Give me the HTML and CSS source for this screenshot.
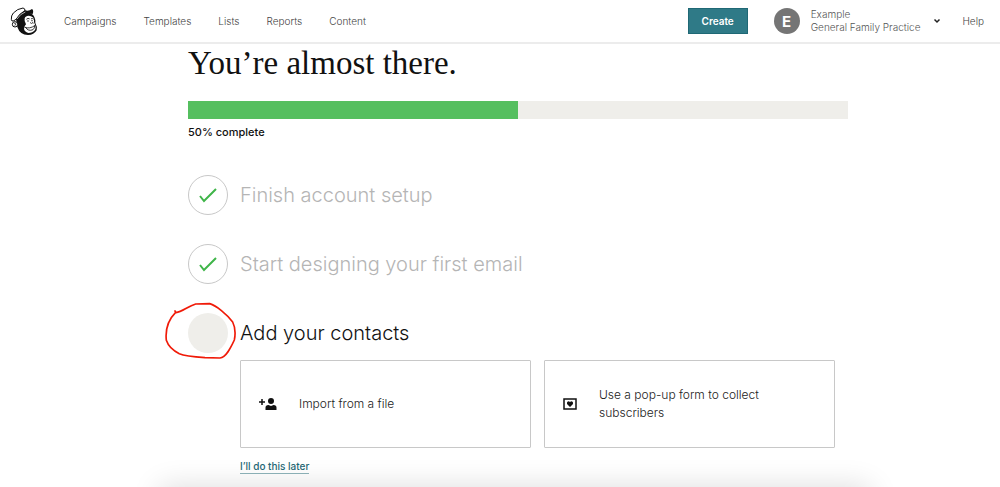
FILE: index.html
```html
<!DOCTYPE html>
<html lang="en">
<head>
  <meta charset="UTF-8">
  <meta name="viewport" content="width=device-width, initial-scale=1">
  <title>Mailchimp</title>
  <link rel="stylesheet" href="styles.css">
</head>
<body>

<header class="topbar">
  <a class="logo" href="#" aria-label="Mailchimp">
    <svg viewBox="30 24 84 87" width="28" height="29">
      <path fill="#111" d="M48 58 Q56 44 74 40 Q98 40 103 54 Q107 62 106 72 Q113 84 110 94 Q102 108 84 108 Q60 108 52 84 Z"/>
      <path fill="#fff" d="M76 54 Q85 48 93 52 Q101 54 102 62 Q101 70 104 74 Q109 86 105 93 Q98 102 85 102 Q73 98 72 89 Q72 82 78 76 Q72 66 74 58 Z"/>
      <path fill="none" stroke="#111" stroke-width="2.5" stroke-linecap="round" d="M75 85 Q89 91 104 80 M77 86 Q85 98 99 92 Q104 88 104 81 M92 71 l2 3 M98 70 l1 3 M80 60 q4 -4 8 -1 M94 59 q4 -2 6 1"/>
      <circle cx="84" cy="66" r="2" fill="#111"/>
      <circle cx="96" cy="65" r="2" fill="#111"/>
      <path fill="#fff" stroke="#111" stroke-width="3" stroke-linejoin="round" d="M34 61 Q33 50 40 42 Q52 29 69 27 Q76 28 75 36 Q59 42 48 61 Q41 67 36 66 Z"/>
      <path fill="#111" d="M49 64 Q58 44 75 34 Q86 38 96 30 Q102 34 98 45 Q84 42 73 50 Q62 57 58 70 Z"/>
      <path fill="none" stroke="#fff" stroke-width="2" d="M51 60 Q61 44 76 39"/>
      <circle cx="45" cy="76" r="8" fill="#fff" stroke="#111" stroke-width="3"/>
      <path fill="none" stroke="#111" stroke-width="2" d="M42 73 q5 -2 6 3 q-4 1 -4 4"/>
    </svg>
  </a>
  <nav class="menu">
    <a href="#">Campaigns</a>
    <a href="#">Templates</a>
    <a href="#">Lists</a>
    <a href="#">Reports</a>
    <a href="#">Content</a>
  </nav>
  <button class="create" type="button">Create</button>
  <button class="account" type="button">
    <span class="avatar">E</span>
    <span class="account-name">Example<br>General Family Practice</span>
    <svg class="chevron" viewBox="0 0 8 6" width="8" height="6"><path d="M1.5 1.5 L4 4 L6.5 1.5" fill="none" stroke="#222" stroke-width="1.5"/></svg>
  </button>
  <a class="help" href="#">Help</a>
</header>

<main class="page">
  <div class="content">
    <h1>You’re almost there.</h1>
    <div class="progress" role="progressbar" aria-labelledby="progress-label" aria-valuenow="50" aria-valuemin="0" aria-valuemax="100">
      <div class="progress-fill" style="width: 50%"></div>
    </div>
    <p class="progress-label" id="progress-label">50% complete</p>

    <ol class="steps">
      <li class="step done">
        <span class="marker">
          <svg viewBox="0 0 20 16" width="20" height="16"><path d="M2 9 L6 14 L18 2" fill="none" stroke="#3fb549" stroke-width="2"/></svg>
        </span>
        <h2>Finish account setup</h2>
      </li>
      <li class="step done">
        <span class="marker">
          <svg viewBox="0 0 20 16" width="20" height="16"><path d="M2 9 L6 14 L18 2" fill="none" stroke="#3fb549" stroke-width="2"/></svg>
        </span>
        <h2>Start designing your first email</h2>
      </li>
      <li class="step current">
        <span class="marker">
          <svg class="scribble" viewBox="30 34 216 174" width="72" height="58">
            <path d="M60 61 L63 66 C82 64 98 47 122 40 L164 39 C184 45 215 70 233 94 C240 108 242 128 238 148 C226 174 213 200 195 202 L150 201 C125 199 90 196 73 189 C54 180 39 164 34 149 C30 112 39 88 62 65" fill="none" stroke="#f01a08" stroke-width="5" stroke-linecap="round" stroke-linejoin="round"/>
          </svg>
        </span>
        <h2>Add your contacts</h2>
      </li>
    </ol>

    <div class="options">
      <a class="option" href="#">
        <svg viewBox="0 0 18 14" width="18" height="14">
          <path d="M0 5 H6 M3 2 V8" stroke="#111" stroke-width="1.5"/>
          <circle cx="12" cy="4" r="3" fill="#111"/>
          <path d="M6.5 13 V10.5 Q6.5 8 9.5 8 L12 9 L14.5 8 Q17.5 8 17.5 10.5 V13 Z" fill="#111"/>
        </svg>
        <span>Import from a file</span>
      </a>
      <a class="option" href="#">
        <svg viewBox="0 0 14 12" width="14" height="12">
          <rect x="1" y="1" width="12" height="10" fill="none" stroke="#111" stroke-width="1.5"/>
          <path d="M7 9 L4 6 Q3.5 3.5 5.5 3.3 Q6.5 3.3 7 4.2 Q7.5 3.3 8.5 3.3 Q10.5 3.5 10 6 Z" fill="#111"/>
        </svg>
        <span>Use a pop-up form to collect subscribers</span>
      </a>
    </div>
    <a class="later" href="#">I’ll do this later</a>
  </div>
</main>

<div class="drawer"></div>

</body>
</html>
```
FILE: styles.css
```css
* {
  box-sizing: border-box;
}
body {
  margin: 0;
  font-family: Inter, "Liberation Sans", sans-serif;
  font-weight: 300;
  color: #111;
  background: #fff;
  overflow: hidden;
}
a {
  color: inherit;
  text-decoration: none;
}
button {
  font: inherit;
  border: 0;
  cursor: pointer;
}
svg {
  display: block;
  flex: none;
}

/* top bar */
.topbar {
  display: flex;
  align-items: center;
  height: 44px;
  padding: 0 16px 0 10px;
  border-bottom: 2px solid #ececec;
  font-size: 10px;
  color: #444;
}
.menu {
  display: flex;
  gap: 27px;
  margin-left: 26px;
}
.create {
  width: 60px;
  height: 26px;
  margin-left: auto;
  padding: 0;
  border: 1px solid #1f6875;
  background: #2f7a87;
  color: #fff;
  font-weight: 600;
}
.account {
  display: flex;
  align-items: center;
  margin-left: 26px;
  padding: 0;
  background: none;
  color: #555;
  text-align: left;
  line-height: 13px;
}
.avatar {
  display: flex;
  align-items: center;
  justify-content: center;
  width: 26px;
  height: 26px;
  margin-right: 11px;
  border-radius: 50%;
  background: #757575;
  color: #fff;
  font-size: 15px;
  font-weight: 700;
}
.chevron {
  margin-left: 13px;
}
.help {
  margin-left: 21px;
}

/* onboarding checklist */
.page {
  padding-left: 36px;
}
.content {
  max-width: 660px;
  margin: 0 auto;
}
h1 {
  margin: 0;
  font-family: "Liberation Serif", serif;
  font-size: 33px;
  font-weight: 400;
  line-height: 39px;
}
.progress {
  height: 18px;
  margin-top: 18px;
  background: #efeeea;
}
.progress-fill {
  height: 100%;
  background: #55bf5f;
}
.progress-label {
  margin: 5px 0 0;
  font-size: 11px;
  font-weight: 500;
  line-height: 16px;
}
.steps {
  display: grid;
  gap: 29px;
  margin: 35px 0 0;
  padding: 0;
  list-style: none;
}
.step {
  display: flex;
  align-items: center;
  gap: 12px;
}
.step h2 {
  margin: 0;
  font-size: 20px;
  font-weight: 300;
}
.done h2 {
  color: #b5b5b5;
}
.marker {
  position: relative;
  display: flex;
  align-items: center;
  justify-content: center;
  width: 40px;
  height: 40px;
  border-radius: 50%;
}
.done .marker {
  border: 1px solid #c8c8c8;
}
.current .marker {
  background: #efeeea;
}
.scribble {
  position: absolute;
  top: -11px;
  left: -23px;
}
.options {
  display: grid;
  grid-template-columns: 1fr 1fr;
  gap: 13px;
  margin: 7px 13px 0 52px;
}
.option {
  display: flex;
  align-items: center;
  min-height: 88px;
  padding: 0 60px 0 18px;
  gap: 22px;
  border: 1px solid #c8c8c8;
  border-radius: 1px;
  color: #222;
  font-size: 12px;
  line-height: 18px;
}
.later {
  display: inline-block;
  margin: 12px 0 0 52px;
  border-bottom: 1px solid #8eb4ba;
  color: #1f6875;
  font-size: 10px;
  font-weight: 500;
  line-height: 13px;
}

/* panel that sits just under the bottom edge */
.drawer {
  position: fixed;
  top: 100%;
  left: 16%;
  right: 13%;
  height: 40px;
  box-shadow: 0 0 30px rgba(0, 0, 0, 0.14);
}
```
